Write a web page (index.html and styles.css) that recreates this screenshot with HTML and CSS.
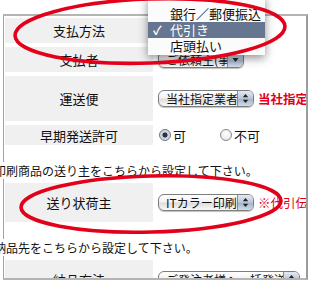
FILE: index.html
```html
<!DOCTYPE html>
<html lang="ja">
<head>
<meta charset="utf-8">
<title>お支払い設定</title>
<link rel="stylesheet" href="styles.css">
</head>
<body>
<div class="frame">
  <div class="form">
    <div class="label">支払方法</div>
    <div class="value"></div>

    <div class="label">支払者</div>
    <div class="value">
      <span class="select w-short"><span class="sel-text">ご依頼主(事業者)</span><span class="sel-arrow"><svg width="7" height="8" viewBox="0 0 7 8"><path d="M0.5 2 L6.5 2 L3.5 6 Z" fill="#222"/></svg></span></span>
    </div>

    <div class="label tall">運送便</div>
    <div class="value">
      <span class="select"><span class="sel-text">当社指定業者</span><span class="sel-arrow"><svg width="7" height="11" viewBox="0 0 7 11"><path d="M3.5 1 L6.2 4.2 L0.8 4.2 Z M3.5 10 L6.2 6.8 L0.8 6.8 Z" fill="#222"/></svg></span></span>
      <span class="warn bold">当社指定業者以外の場合</span>
    </div>

    <div class="label short">早期発送許可</div>
    <div class="value">
      <span class="radio on"></span><span class="radio-text">可</span>
      <span class="radio"></span><span class="radio-text">不可</span>
    </div>
  </div>

  <p class="note">印刷商品の送り主をこちらから設定して下さい。</p>

  <div class="form">
    <div class="label mid">送り状荷主</div>
    <div class="value">
      <span class="select"><span class="sel-text">ITカラー印刷</span><span class="sel-arrow"><svg width="7" height="11" viewBox="0 0 7 11"><path d="M3.5 1 L6.2 4.2 L0.8 4.2 Z M3.5 10 L6.2 6.8 L0.8 6.8 Z" fill="#222"/></svg></span></span>
      <span class="warn">※代引伝票の場合</span>
    </div>
  </div>

  <p class="note">納品先をこちらから設定して下さい。</p>

  <div class="form">
    <div class="label mid">納品方法</div>
    <div class="value">
      <span class="select w-long"><span class="sel-text">ご発注者様へ一括発送</span><span class="sel-arrow"><svg width="7" height="11" viewBox="0 0 7 11"><path d="M3.5 1 L6.2 4.2 L0.8 4.2 Z M3.5 10 L6.2 6.8 L0.8 6.8 Z" fill="#222"/></svg></span></span>
    </div>
  </div>
</div>

<div class="menu">
  <div class="menu-item">銀行／郵便振込</div>
  <div class="menu-item active"><span class="check">✓</span>代引き</div>
  <div class="menu-item">店頭払い</div>
</div>

<svg class="marks" width="314" height="289" viewBox="0 0 314 289">
  <ellipse cx="150" cy="31" rx="135" ry="32" transform="rotate(-2 150 31)" fill="none" stroke="#e2001a" stroke-width="3.6"/>
  <ellipse cx="151" cy="204" rx="130" ry="28" transform="rotate(-1.5 151 204)" fill="none" stroke="#e2001a" stroke-width="3.6"/>
</svg>
</body>
</html>
```

FILE: styles.css
```css
* { box-sizing: border-box; }

html, body {
  margin: 0;
  padding: 0;
}

body {
  width: 314px;
  height: 289px;
  overflow: hidden;
  background: #fff;
  position: relative;
  font-family: "Noto Sans CJK JP", "Noto Sans", sans-serif;
  color: #111;
}

.frame {
  margin: 14px 0 0 3px;
  width: 305px;
  height: 266px;
  border-top: 2px solid #b4b4b4;
  border-left: 1px solid #a4a4a4;
  border-right: 2px solid #9c9c9c;
  border-bottom: 2px solid #b4b4b4;
  padding: 2px 0 0 1px;
  overflow-x: visible;
  overflow-y: clip;
}

.form {
  display: grid;
  grid-template-columns: 148px 1fr;
  column-gap: 3px;
  row-gap: 4px;
}

.label {
  background: #f0f0f0;
  height: 25px;
  display: flex;
  align-items: center;
  justify-content: center;
  font-size: 13px;
  line-height: 1;
}

.label.tall { height: 45px; }
.label.short { height: 20px; }
.label.mid { height: 39px; }

.value {
  display: flex;
  align-items: center;
  overflow: hidden;
  white-space: nowrap;
  padding-left: 2px;
}

.select {
  display: inline-flex;
  align-items: stretch;
  width: 96px;
  height: 17px;
  border: 1px solid #7d7d7d;
  border-radius: 6px;
  background: linear-gradient(#ffffff, #f3f3f3 45%, #dedede 55%, #f7f7f7);
  box-shadow: 0 1px 1px rgba(0,0,0,0.25);
  overflow: hidden;
  flex: none;
}

.select.w-short { width: 86px; }
.select.w-long { width: 142px; }

.sel-text {
  flex: 1;
  font-size: 12px;
  line-height: 15px;
  padding-left: 7px;
  color: #111;
  overflow: hidden;
}

.sel-arrow {
  width: 16px;
  border-left: 1px solid #8a8a8a;
  background: linear-gradient(#e4eaf2, #b9c6d8 50%, #9eb0c8 52%, #d3dcea);
  display: flex;
  align-items: center;
  justify-content: center;
}

.warn {
  color: #e2001a;
  font-size: 12.5px;
  margin-left: 4px;
}

.warn.bold { font-weight: bold; }

.radio {
  width: 12px;
  height: 12px;
  border-radius: 50%;
  border: 1px solid #888;
  background: radial-gradient(circle at 50% 35%, #ffffff, #e2e2e2);
  margin-left: 1px;
  position: relative;
  flex: none;
}

.radio.on {
  background: radial-gradient(circle, #2b3340 0 2.2px, #c2cbd8 2.8px, #eef2f7 100%);
  border-color: #6e7682;
}

.radio-text {
  font-size: 13px;
  margin: 0 33px 0 2px;
}

.note {
  margin: 17px 0 4px -11px;
  background: #fff;
  font-size: 12px;
  line-height: 17px;
  white-space: nowrap;
  position: relative;
}

.menu {
  position: absolute;
  left: 148px;
  top: -4px;
  width: 117px;
  padding: 10px 0 1px;
  background: #fbfbfb;
  box-shadow: 0 3px 9px rgba(0,0,0,0.45);
}

.menu-item {
  height: 16px;
  line-height: 16px;
  font-size: 13px;
  padding-left: 22px;
  color: #111;
  position: relative;
}

.menu-item.active {
  background: #667690;
  color: #fff;
}

.check {
  position: absolute;
  left: 5px;
  top: 0;
  font-size: 12px;
  font-weight: bold;
}

.marks {
  position: absolute;
  left: 0;
  top: 0;
  pointer-events: none;
}
```
